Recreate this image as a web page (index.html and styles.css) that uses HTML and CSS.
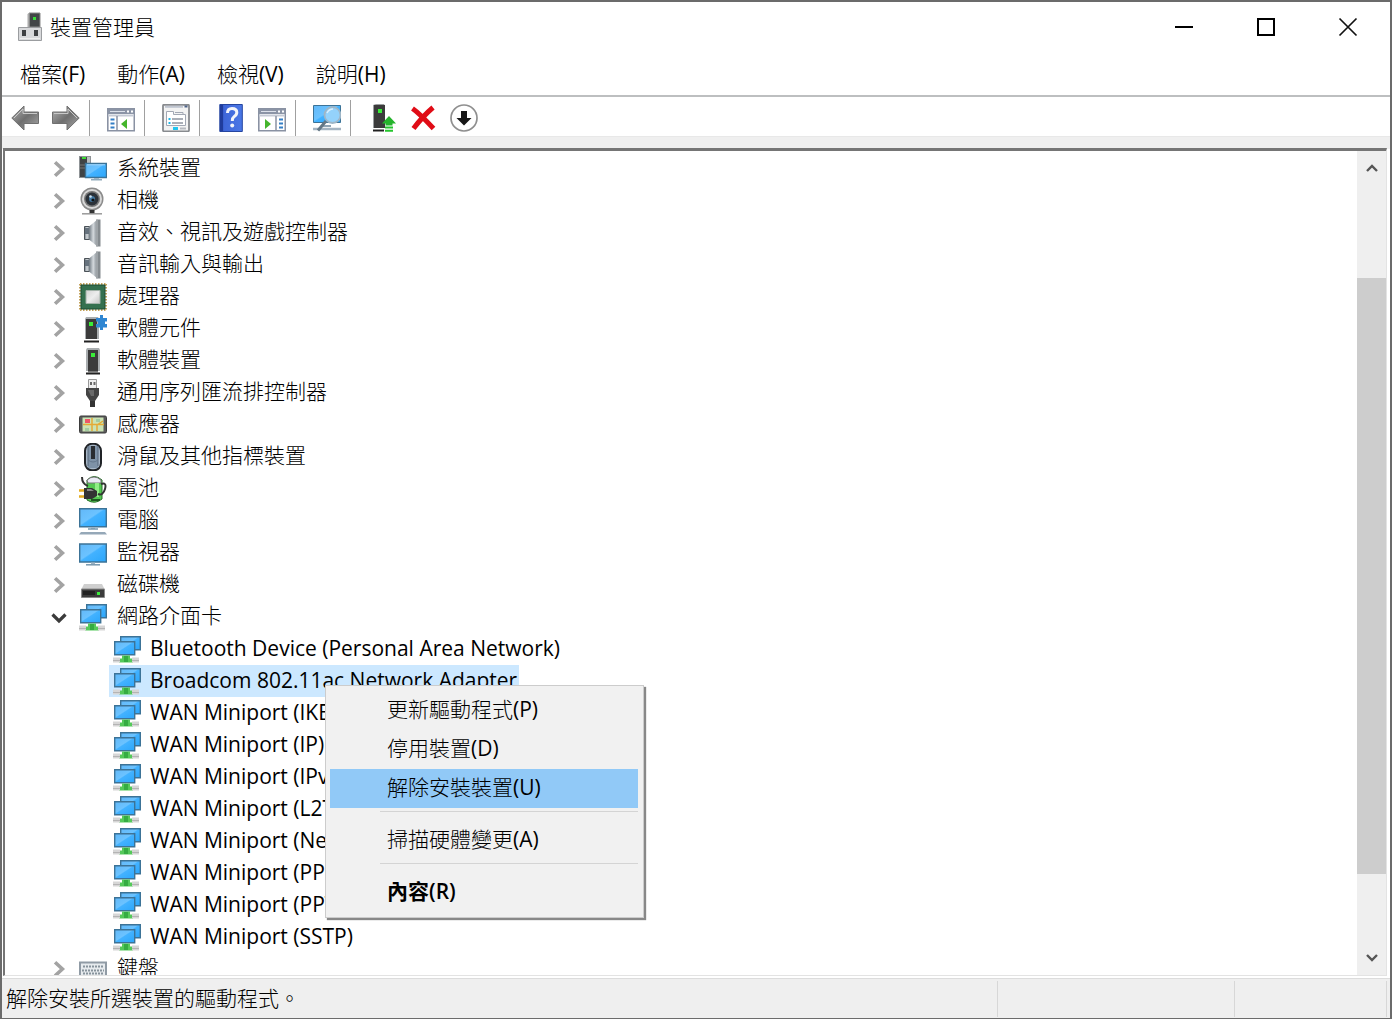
FILE: index.html
```html
<!DOCTYPE html>
<html lang="zh-Hant">
<head>
<meta charset="utf-8">
<title>裝置管理員</title>
<link rel="stylesheet" href="styles.css">
</head>
<body>
<svg class="defs" aria-hidden="true">
  <defs>
    <linearGradient id="blue" x1="0" y1="0" x2="1" y2="1"><stop offset="0" stop-color="#62b8f8"/><stop offset=".45" stop-color="#6cc3ff"/><stop offset=".5" stop-color="#43b2ff"/><stop offset="1" stop-color="#2ba6fb"/></linearGradient>
    <linearGradient id="steel" x1="0" x2="1"><stop offset="0" stop-color="#6e7880"/><stop offset=".5" stop-color="#d4d9dd"/><stop offset="1" stop-color="#7d858b"/></linearGradient>
    <linearGradient id="arrow" x1="0" y1="0" x2="1" y2="1"><stop offset="0" stop-color="#b5b5b5"/><stop offset=".5" stop-color="#6f6f6f"/><stop offset="1" stop-color="#a8a8a8"/></linearGradient>
    <linearGradient id="help" x1="0" x2="1"><stop offset="0" stop-color="#2244b0"/><stop offset=".2" stop-color="#3e66d8"/><stop offset="1" stop-color="#4a77e6"/></linearGradient>
    <linearGradient id="chipface" x1="0" y1="0" x2="1" y2="1"><stop offset="0" stop-color="#d4d4d4"/><stop offset=".5" stop-color="#ededed"/><stop offset="1" stop-color="#c4c4c4"/></linearGradient>
  </defs>
  <symbol id="i-chevron" viewBox="0 0 12 16"><path d="M2.500 2l6.500 6-6.500 6" fill="none" stroke="#a3a3a3" stroke-width="3.200"/></symbol>
  <symbol id="i-open" viewBox="0 0 16 12"><path d="M1.500 3.500L8 10l6.500-6.500" fill="none" stroke="#3b3b3b" stroke-width="3.200"/></symbol>
  <symbol id="i-system" viewBox="0 0 28 28"><path d="M0 1h12v22H0z" fill="#8f9396"/><path d="M1 2h7v20H1z" fill="#404345"/><path d="M8 2h3v20H8z" fill="#b9bdbf"/><path d="M3 2h4v2H3z" fill="#3ddc34"/><path d="M1 10h7M1 13h7" stroke="#777"/><path d="M6.500 8.500h21v14h-21z" fill="url(#blue)" stroke="#3c7397" stroke-width="1.400"/><path d="M8 9.800h18" stroke="#a6d8fb"/><path d="M15 23h5v2h-5z" fill="#9db4c4"/><path d="M12 24h11v1.500H12z" fill="#90aabb"/></symbol>
  <symbol id="i-camera" viewBox="0 0 28 28"><circle cx="13" cy="12" r="11.500" fill="#8b8b8b"/><circle cx="13" cy="12" r="10" fill="#d9d9d9"/><circle cx="13" cy="12" r="8" fill="#777"/><circle cx="13" cy="12" r="6.500" fill="#2b3138"/><circle cx="13" cy="12" r="3" fill="#4377a0"/><circle cx="14" cy="13" r="1.600" fill="#111"/><circle cx="11.500" cy="9.500" r="1.300" fill="#cfe4f4"/><path d="M10.500 23h5v4h-5z" fill="#333"/><path d="M3 26.800h20" stroke="#999" stroke-width="1.500"/></symbol>
  <symbol id="i-speaker" viewBox="0 0 28 28"><path d="M5.500 7.500h5v13h-5z" fill="url(#steel)" stroke="#4b5258"/><path d="M10 7.500L18.500.5v27L10 20.500z" fill="url(#steel)"/><path d="M17 .5h4.500v27H17z" fill="#858b8f"/><path d="M18 1v26" stroke="#b8bdc1"/><path d="M6 9h4v6H6z" fill="#66727d"/></symbol>
  <symbol id="i-cpu" viewBox="0 0 28 28"><path d="M1 1.500h27M1 26.500h27M1.500 1v27M26.500 1v27" stroke="#c3a25a" stroke-width="3" stroke-dasharray="1.500 1.500"/><path d="M2 2h24v24H2z" fill="#35704f" stroke="#1d4c34"/><path d="M7 7.500h14v13H7z" fill="url(#chipface)" stroke="#a2b2a8"/></symbol>
  <symbol id="i-soft" viewBox="0 0 28 28"><path d="M8 1h12l1 2v21H7V3z" fill="#a9adaf"/><path d="M9 3h10v21H9z" fill="#3b3b3b"/><path d="M12 6h4v4h-4z" fill="#39ed38"/><path d="M7 26.500h14" stroke="#222" stroke-width="2"/><path d="M9 24h10v2H9z" fill="#777"/></symbol>
  <symbol id="i-component" viewBox="0 0 28 28"><path d="M7 2h12l1 2v20H6V4z" fill="#a9adaf"/><path d="M7 4h11v20H7z" fill="#3b3b3b"/><path d="M10 7h4v4h-4z" fill="#39ed38"/><path d="M5 26.500h15" stroke="#222" stroke-width="2"/><path d="M17 3h4V0h3v3h4v3.500h-2V9h2v3.500h-4V15h-3v-2.500h-4V9h2V6.500h-2z" fill="#2f86d2"/></symbol>
  <symbol id="i-usb" viewBox="0 0 28 28"><path d="M9.500.5h8v9h-8z" fill="#eee" stroke="#999"/><path d="M11 3h2v3h-2zM14.500 3h2v3h-2z" fill="#666"/><path d="M7 9h13v7l-4 6v6h-5v-6l-4-6z" fill="#444"/><path d="M9 11h6v6h-3z" fill="#6a6a6a"/><path d="M11 22h5v6h-5z" fill="#333"/></symbol>
  <symbol id="i-sensor" viewBox="0 0 28 28"><rect x=".5" y="5" width="27" height="17" rx="1.500" fill="#5a5a5a" stroke="#3b3b3b"/><path d="M3.500 6.500h21v14h-21z" fill="#cbe3b4"/><path d="M4 13.500h21M13 7v13M18 14v6M18 14l6-4" stroke="#e5aa35" stroke-width="1.500" fill="none"/><path d="M6 8h5v4H6z" fill="#ee5568"/><path d="M17 8h4v3h-4zM6 17h4v3H6z" fill="#a4cba0"/></symbol>
  <symbol id="i-mouse" viewBox="0 0 28 28"><rect x="6" y=".8" width="16" height="26.500" rx="7" fill="#a7b7c8" stroke="#202327" stroke-width="2"/><path d="M9 3h10v22H9z" fill="#7e92a7"/><path d="M9 3v20M19 3v20" stroke="#56677a"/><path d="M9 17q5 4 10 0" stroke="#64778b" fill="none"/><rect x="12" y="3" width="4" height="13" fill="#292c30"/></symbol>
  <symbol id="i-battery" viewBox="0 0 28 28"><path d="M8 5q7-7 15 0v19q-7 6-15 1z" fill="#55c852" stroke="#266f28"/><path d="M8 5q7-6 14 0v3H9z" fill="#e9e9f5" stroke="#777"/><path d="M16 8h4v14h-4z" fill="#91ed86"/><path d="M22 9q6-2 4 5t-7 5" fill="none" stroke="#333" stroke-width="2"/><path d="M3 2q0 7 6 9" stroke="#333" stroke-width="2" fill="none"/><path d="M0 15.500h6M0 21.500h6" stroke="#e3ac20" stroke-width="2.500"/><path d="M5 13h8l5 3v5l-5 3H5z" fill="#333"/><path d="M8 14h4l3 2H8z" fill="#888"/><path d="M12 25h9" stroke="#1d5a20" stroke-width="2"/></symbol>
  <symbol id="i-computer" viewBox="0 0 28 28"><path d="M.7 1.700h26.600v18H.7z" fill="url(#blue)" stroke="#3c7397" stroke-width="1.400"/><path d="M12 20h4v2h-4z" fill="#9db4c4"/><path d="M9 22h10" stroke="#7898ae" stroke-width="1.500"/><path d="M2 25h24l2 2.500H0z" fill="#95a8b8"/></symbol>
  <symbol id="i-monitor" viewBox="0 0 28 28"><path d="M.7 5h26.600v18H.7z" fill="url(#blue)" stroke="#3c7397" stroke-width="1.400"/><path d="M12 23.500h4v2h-4z" fill="#9db4c4"/><path d="M7 25.800h14" stroke="#7898ae" stroke-width="1.500"/></symbol>
  <symbol id="i-disk" viewBox="0 0 28 28"><path d="M5 13h18l3 6H2z" fill="#cfcfcf"/><path d="M2.500 18h23v8.500h-23z" fill="#3c3c3c" stroke="#8a8a8a"/><path d="M4 20h12v4H4z" fill="#222"/><path d="M18 21h3v3h-3z" fill="#3ded3d"/></symbol>
  <symbol id="i-net" viewBox="0 0 28 28"><path d="M7.700 1.700h19.600v13H7.700z" fill="url(#blue)" stroke="#3c7397" stroke-width="1.400"/><path d="M1.700 6.700h20v13h-20z" fill="url(#blue)" stroke="#3c7397" stroke-width="1.400"/><path d="M9 20.500h8v3h3v4H6v-4h3z" fill="#55c95a"/><path d="M0 22.500h7v5H0zM19 22.500h7v5h-7z" fill="#d6d6d6"/><path d="M0 25.500h7M19 25.500h7" stroke="#b4b4b4"/><path d="M11 21h4v6h-4z" fill="#35ac42"/></symbol>
  <symbol id="i-keyboard" viewBox="0 0 28 28"><path d="M1 7.500h26v16H1z" fill="#e7ebee" stroke="#909ba5" stroke-width="2"/><path d="M4 11.500h21M3 15.500h22M4 18.500h20" stroke="#87939c" stroke-width="2" stroke-dasharray="2 1"/><path d="M8 21h12" stroke="#87939c" stroke-width="2"/></symbol>

  <symbol id="t-app" viewBox="0 0 28 30"><path d="M11 1h11v14H11z" fill="#424547" stroke="#888"/><path d="M9.500 2l2-1v14h-2z" fill="#aaa"/><path d="M15 5h3v3h-3z" fill="#39df38"/><path d="M.5 15.500h23v13H.5z" fill="#d8d9db" stroke="#9b9da0"/><path d="M4 18h4v6H4zM16 18h4v6h-4z" fill="#3e4042"/><path d="M2 26.500h20" stroke="#eee"/></symbol>
  <symbol id="t-back" viewBox="0 0 28 28"><path d="M.8 14L13 2v6h14.500v11.500H13V26z" fill="url(#arrow)" stroke="#707070"/><path d="M3 14l9-9v4.500h14" fill="none" stroke="#c9c9c9"/></symbol>
  <symbol id="t-forward" viewBox="0 0 28 28"><path d="M27.200 14L15 2v6H.5v11.500H15V26z" fill="url(#arrow)" stroke="#707070"/><path d="M2 9.500h14V5l9 9" fill="none" stroke="#c9c9c9"/></symbol>
  <symbol id="t-tree" viewBox="0 0 28 28"><path d="M.8 4.800h26.500v22H.8z" fill="#fff" stroke="#8a92a3" stroke-width="1.600"/><path d="M1 5h26v5H1z" fill="#8b94a6"/><path d="M3 7.500h15" stroke="#dce1ea"/><path d="M20 7.500h2M24 7.500h2" stroke="#fff" stroke-width="2"/><path d="M1 11.500h26" stroke="#c5cad5" stroke-width="2"/><path d="M10 12v15" stroke="#8a92a3" stroke-width="1.500"/><path d="M3.500 15.500h4M3.500 19.500h4M3.500 23.500h4" stroke="#347fc6" stroke-width="1.800"/><path d="M20 15v10l-6-5z" fill="#45b52c"/></symbol>
  <symbol id="t-action" viewBox="0 0 28 28"><path d="M.8 4.800h26.500v22H.8z" fill="#fff" stroke="#8a92a3" stroke-width="1.600"/><path d="M1 5h26v5H1z" fill="#8b94a6"/><path d="M3 7.500h15" stroke="#dce1ea"/><path d="M20 7.500h2M24 7.500h2" stroke="#fff" stroke-width="2"/><path d="M1 11.500h26" stroke="#c5cad5" stroke-width="2"/><path d="M18 12v15" stroke="#8a92a3" stroke-width="1.500"/><path d="M21 15.500h4M21 19.500h4M21 23.500h4" stroke="#347fc6" stroke-width="1.800"/><path d="M7 15v10l6-5z" fill="#45b52c"/></symbol>
  <symbol id="t-props" viewBox="0 0 28 28"><rect x="1" y=".8" width="26" height="26.500" rx="1" fill="#f3f3f3" stroke="#888b8f" stroke-width="1.800"/><path d="M3 2.800h18" stroke="#bfc5d0" stroke-width="2"/><path d="M22.500 2.500h3" stroke="#4c6389" stroke-width="2"/><path d="M4.500 7.500h7v3h12v11h-19z" fill="#fff" stroke="#a2a8b4"/><path d="M13 8.500h8v2" stroke="#a2a8b4" fill="none"/><path d="M10 15h11M10 19h11" stroke="#8e95a1" stroke-width="1.500"/><path d="M6.500 15h2M6.500 19h2" stroke="#1fb6e8" stroke-width="2"/><path d="M11 24.500h5" stroke="#22c5ef" stroke-width="3"/><path d="M18 24.500h6" stroke="#b7bac0" stroke-width="2"/></symbol>
  <symbol id="t-help" viewBox="0 0 28 28"><path d="M2.800.5h22.500v27H2.800z" fill="url(#help)" stroke="#2545a0"/><path d="M4.500 1v26" stroke="#203c9c" stroke-width="3"/><path d="M10.500 9q0-4.500 4.500-4.500 4.800 0 4.800 4 0 2.500-2.800 4.200-1.700 1.100-1.700 4.300" fill="none" stroke="#f2f4fa" stroke-width="3"/><circle cx="15.200" cy="21.500" r="2" fill="#f2f4fa"/></symbol>
  <symbol id="t-scan" viewBox="0 0 28 28"><path d="M.5 1.500h27v17H.5z" fill="url(#blue)" stroke="#3c7397"/><path d="M0 25h28" stroke="#a4b4c2" stroke-width="2.500"/><path d="M10 22h8" stroke="#8fa4b4" stroke-width="2"/><circle cx="19.500" cy="11" r="8" fill="#94d2fb" stroke="#9eb6c7" stroke-width="1.800"/><path d="M13 17l-8 9.500" stroke="#647785" stroke-width="3"/><path d="M14 9q2-4 6-4" stroke="#d9f0ff" stroke-width="1.500" fill="none"/></symbol>
  <symbol id="t-update" viewBox="1 0 28 28"><path d="M6 1l3-1h8l1 2v22H6z" fill="#9b9ea0"/><path d="M7 1h11v23H7z" fill="#3b3b3b"/><path d="M11 5h4v4h-4z" fill="#39ed38"/><path d="M6 26.500h11" stroke="#222" stroke-width="2"/><path d="M15 19.500l7-7.500 7 7.500h-3.500v2h-7v-2z" fill="#25b32c"/><path d="M18 23.500h8M18 26.800h8" stroke="#25c62e" stroke-width="2"/></symbol>
  <symbol id="t-delete" viewBox="0 0 28 28"><path d="M3.500 4.500Q10 9 24.500 24.500M24 3.500Q14 12 4.500 24.500" fill="none" stroke="#e00c16" stroke-width="5"/></symbol>
  <symbol id="t-disable" viewBox="0 0 28 28"><circle cx="14" cy="14" r="13" fill="#fff" stroke="#8f8f8f" stroke-width="1.700"/><path d="M11 7h6v7h4.500L14 21.500 6.500 14H11z" fill="#171717"/></symbol>
</svg>

<div class="window">
  <header class="titlebar">
    <svg class="app-icon"><use href="#t-app"/></svg>
    <h1 class="title">裝置管理員</h1>
    <div class="controls">
      <button type="button" aria-label="最小化"><svg viewBox="0 0 20 20"><path d="M1 10h18" stroke="#000" stroke-width="2"/></svg></button>
      <button type="button" aria-label="最大化"><svg viewBox="0 0 20 20"><path d="M2 2h16v16H2z" fill="none" stroke="#000" stroke-width="2"/></svg></button>
      <button type="button" aria-label="關閉"><svg viewBox="0 0 20 20"><path d="M1.500 1.500l17 17M18.500 1.500l-17 17" stroke="#111" stroke-width="1.700"/></svg></button>
    </div>
  </header>

  <nav class="menubar">
    <button type="button">檔案<span class="key">(F)</span></button>
    <button type="button">動作<span class="key">(A)</span></button>
    <button type="button">檢視<span class="key">(V)</span></button>
    <button type="button">說明<span class="key">(H)</span></button>
  </nav>

  <div class="toolbar" role="toolbar">
    <button type="button" aria-label="上一頁"><svg><use href="#t-back"/></svg></button>
    <button type="button" aria-label="下一頁"><svg><use href="#t-forward"/></svg></button>
    <span class="divider"></span>
    <button type="button" aria-label="顯示主控台樹狀目錄"><svg><use href="#t-tree"/></svg></button>
    <span class="divider"></span>
    <button type="button" aria-label="內容"><svg><use href="#t-props"/></svg></button>
    <span class="divider"></span>
    <button type="button" aria-label="說明"><svg><use href="#t-help"/></svg></button>
    <button type="button" aria-label="顯示執行窗格"><svg><use href="#t-action"/></svg></button>
    <span class="divider"></span>
    <button type="button" aria-label="掃描硬體變更"><svg><use href="#t-scan"/></svg></button>
    <span class="divider"></span>
    <button type="button" aria-label="更新驅動程式"><svg><use href="#t-update"/></svg></button>
    <button type="button" aria-label="解除安裝裝置"><svg><use href="#t-delete"/></svg></button>
    <button type="button" aria-label="停用裝置"><svg><use href="#t-disable"/></svg></button>
  </div>

  <main class="pane">
    <div class="pane-inner">
      <ul class="tree">
        <li class="row"><button class="toggle" type="button" aria-label="展開"><svg><use href="#i-chevron"/></svg></button><svg class="icon"><use href="#i-system"/></svg><span>系統裝置</span></li>
        <li class="row"><button class="toggle" type="button" aria-label="展開"><svg><use href="#i-chevron"/></svg></button><svg class="icon"><use href="#i-camera"/></svg><span>相機</span></li>
        <li class="row"><button class="toggle" type="button" aria-label="展開"><svg><use href="#i-chevron"/></svg></button><svg class="icon"><use href="#i-speaker"/></svg><span>音效、視訊及遊戲控制器</span></li>
        <li class="row"><button class="toggle" type="button" aria-label="展開"><svg><use href="#i-chevron"/></svg></button><svg class="icon"><use href="#i-speaker"/></svg><span>音訊輸入與輸出</span></li>
        <li class="row"><button class="toggle" type="button" aria-label="展開"><svg><use href="#i-chevron"/></svg></button><svg class="icon"><use href="#i-cpu"/></svg><span>處理器</span></li>
        <li class="row"><button class="toggle" type="button" aria-label="展開"><svg><use href="#i-chevron"/></svg></button><svg class="icon"><use href="#i-component"/></svg><span>軟體元件</span></li>
        <li class="row"><button class="toggle" type="button" aria-label="展開"><svg><use href="#i-chevron"/></svg></button><svg class="icon"><use href="#i-soft"/></svg><span>軟體裝置</span></li>
        <li class="row"><button class="toggle" type="button" aria-label="展開"><svg><use href="#i-chevron"/></svg></button><svg class="icon"><use href="#i-usb"/></svg><span>通用序列匯流排控制器</span></li>
        <li class="row"><button class="toggle" type="button" aria-label="展開"><svg><use href="#i-chevron"/></svg></button><svg class="icon"><use href="#i-sensor"/></svg><span>感應器</span></li>
        <li class="row"><button class="toggle" type="button" aria-label="展開"><svg><use href="#i-chevron"/></svg></button><svg class="icon"><use href="#i-mouse"/></svg><span>滑鼠及其他指標裝置</span></li>
        <li class="row"><button class="toggle" type="button" aria-label="展開"><svg><use href="#i-chevron"/></svg></button><svg class="icon"><use href="#i-battery"/></svg><span>電池</span></li>
        <li class="row"><button class="toggle" type="button" aria-label="展開"><svg><use href="#i-chevron"/></svg></button><svg class="icon"><use href="#i-computer"/></svg><span>電腦</span></li>
        <li class="row"><button class="toggle" type="button" aria-label="展開"><svg><use href="#i-chevron"/></svg></button><svg class="icon"><use href="#i-monitor"/></svg><span>監視器</span></li>
        <li class="row"><button class="toggle" type="button" aria-label="展開"><svg><use href="#i-chevron"/></svg></button><svg class="icon"><use href="#i-disk"/></svg><span>磁碟機</span></li>
        <li>
          <div class="row"><button class="toggle" type="button" aria-label="摺疊"><svg><use href="#i-open"/></svg></button><svg class="icon"><use href="#i-net"/></svg><span>網路介面卡</span></div>
          <ul class="branch">
            <li class="leaf"><svg class="icon"><use href="#i-net"/></svg><span>Bluetooth Device (Personal Area Network)</span></li>
            <li class="leaf selected"><svg class="icon"><use href="#i-net"/></svg><span>Broadcom 802.11ac Network Adapter</span></li>
            <li class="leaf"><svg class="icon"><use href="#i-net"/></svg><span>WAN Miniport (IKEv2)</span></li>
            <li class="leaf"><svg class="icon"><use href="#i-net"/></svg><span>WAN Miniport (IP)</span></li>
            <li class="leaf"><svg class="icon"><use href="#i-net"/></svg><span>WAN Miniport (IPv6)</span></li>
            <li class="leaf"><svg class="icon"><use href="#i-net"/></svg><span>WAN Miniport (L2TP)</span></li>
            <li class="leaf"><svg class="icon"><use href="#i-net"/></svg><span>WAN Miniport (Net)</span></li>
            <li class="leaf"><svg class="icon"><use href="#i-net"/></svg><span>WAN Miniport (PPPOE)</span></li>
            <li class="leaf"><svg class="icon"><use href="#i-net"/></svg><span>WAN Miniport (PPTP)</span></li>
            <li class="leaf"><svg class="icon"><use href="#i-net"/></svg><span>WAN Miniport (SSTP)</span></li>
          </ul>
        </li>
        <li class="row"><button class="toggle" type="button" aria-label="展開"><svg><use href="#i-chevron"/></svg></button><svg class="icon"><use href="#i-keyboard"/></svg><span>鍵盤</span></li>
      </ul>
      <div class="scrollbar">
        <button type="button" aria-label="向上捲動"><svg viewBox="0 0 12 12"><path d="M1 9l5-5 5 5" fill="none" stroke="#555" stroke-width="2.400"/></svg></button>
        <div class="track"><div class="thumb"></div></div>
        <button type="button" aria-label="向下捲動"><svg viewBox="0 0 12 12"><path d="M1 3l5 5 5-5" fill="none" stroke="#555" stroke-width="2.400"/></svg></button>
      </div>
    </div>
  </main>

  <footer class="statusbar">
    <span class="message">解除安裝所選裝置的驅動程式。</span>
    <span class="cell cell-mid"></span>
    <span class="cell cell-end"></span>
  </footer>

  <div class="context-menu" role="menu">
    <button type="button" role="menuitem">更新驅動程式<span class="key">(P)</span></button>
    <button type="button" role="menuitem">停用裝置<span class="key">(D)</span></button>
    <button type="button" role="menuitem" class="active">解除安裝裝置<span class="key">(U)</span></button>
    <div class="rule" role="separator"></div>
    <button type="button" role="menuitem">掃描硬體變更<span class="key">(A)</span></button>
    <div class="rule" role="separator"></div>
    <button type="button" role="menuitem" class="default">內容(R)</button>
  </div>
</div>
</body>
</html>
```
FILE: styles.css
```css
* {
  box-sizing: border-box;
}

body {
  margin: 0;
  font-family: "Open Sans", "Noto Sans CJK TC", sans-serif;
  font-size: 21px;
  font-weight: 300;
  line-height: 30px;
  color: #000;
}

button {
  display: flex;
  align-items: center;
  justify-content: center;
  padding: 0;
  border: 0;
  background: none;
  color: inherit;
  font: inherit;
}

ul {
  margin: 0;
  padding: 0;
  list-style: none;
}

svg {
  display: block;
  flex: none;
}

.defs {
  position: absolute;
  width: 0;
  height: 0;
}

.key {
  font-weight: 400;
}

.window {
  position: relative;
  display: flex;
  flex-direction: column;
  height: 100vh;
  border: 2px solid #6b6b6b;
  border-bottom-width: 1px;
  background: #fff;
}

/* Title bar */
.titlebar {
  display: flex;
  align-items: center;
  height: 50px;
  padding-left: 16px;
}

.app-icon {
  width: 28px;
  height: 30px;
}

.title {
  flex: 1;
  margin: 0 0 0 4px;
  font-size: 21px;
  font-weight: 300;
}

.controls {
  display: flex;
  padding-right: 1px;
}

.controls button {
  width: 82px;
  height: 50px;
}

.controls svg {
  width: 20px;
  height: 20px;
}

/* Menu bar */
.menubar {
  display: flex;
  gap: 32px;
  height: 43px;
  padding: 0 18px;
}

.menubar button {
  height: 43px;
}

/* Toolbar */
.toolbar {
  display: flex;
  align-items: center;
  height: 42px;
  padding: 2px 0 0 2px;
  border-top: 2px solid #bdbfc0;
  border-bottom: 1px solid #e8e8e8;
}

.toolbar button {
  width: 41px;
  height: 36px;
}

.toolbar svg {
  width: 28px;
  height: 28px;
}

.divider {
  width: 1px;
  height: 36px;
  margin: 0 10px 0 3px;
  background: #a0a0a0;
}

/* Device tree pane */
.pane {
  display: flex;
  flex: 1;
  min-height: 0;
  padding: 11px 3px 2px 1px;
  background: linear-gradient(#efefef 12px, #fff 12px);
}

.pane-inner {
  display: flex;
  flex: 1;
  min-width: 0;
  border: 1px solid #e3e3e3;
  border-top: 3px solid #757575;
  border-left: 2px solid #757575;
  background: #fff;
  overflow: hidden;
}

.tree {
  flex: 1;
  min-width: 0;
  padding: 2px 0 0 46px;
}

.row,
.leaf {
  display: flex;
  align-items: center;
  height: 32px;
  white-space: nowrap;
}

.row span {
  padding: 0 0 4px 10px;
}

.toggle {
  width: 16px;
  height: 32px;
  margin-right: 12px;
}

.toggle svg {
  width: 16px;
  height: 18px;
}

.icon {
  width: 28px;
  height: 28px;
}

.branch {
  padding-left: 58px;
}

.leaf {
  width: max-content;
  padding: 0 2px 0 4px;
  font-weight: 400;
}

.leaf span {
  padding: 0 0 2px 9px;
}

.selected {
  background: #cce8ff;
}

/* Scroll bar */
.scrollbar {
  display: flex;
  flex-direction: column;
  width: 29px;
  background: #efefef;
}

.scrollbar button {
  height: 34px;
}

.scrollbar svg {
  width: 12px;
  height: 12px;
}

.track {
  display: grid;
  flex: 1;
  grid-template-rows: 93fr 596fr 67fr;
}

.thumb {
  grid-row: 2;
  background: #cdcdcd;
}

/* Status bar */
.statusbar {
  display: flex;
  height: 40px;
  padding: 2px 3px 1px 4px;
  border-top: 1px solid #dcdcdc;
  background: #efefef;
}

.message {
  flex: 1;
  line-height: 35px;
}

.cell {
  border-left: 1px solid #d7d7d7;
}

.cell-mid {
  width: 237px;
}

.cell-end {
  width: 153px;
  border-right: 1px solid #d7d7d7;
}

/* Context menu over the tree */
.context-menu {
  position: absolute;
  top: 683px;
  left: 323px;
  width: 319px;
  padding: 5px 5px 5px 4px;
  border: 1px solid #ccc;
  background: #f1f1f1;
  box-shadow: 2px 2px 1px #888;
}

.context-menu button {
  justify-content: flex-start;
  width: 100%;
  height: 39px;
  padding: 0 0 4px 57px;
}

.context-menu .active {
  background: #91c9f7;
}

.context-menu .default {
  font-weight: 600;
}

.rule {
  height: 13px;
  margin-left: 50px;
  padding-top: 3px;
}

.rule::before {
  content: "";
  display: block;
  height: 1px;
  background: #d4d4d4;
}
```
